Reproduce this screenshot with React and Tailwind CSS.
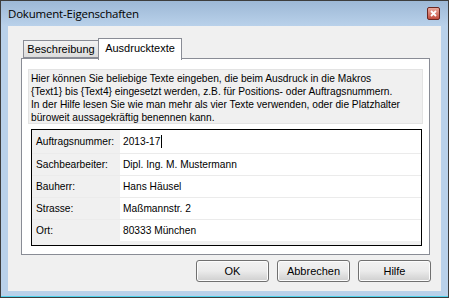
import React from 'react'

const ROWS = [
  { label: 'Auftragsnummer:', value: '2013-17', cursor: true },
  { label: 'Sachbearbeiter:', value: 'Dipl. Ing. M. Mustermann' },
  { label: 'Bauherr:', value: 'Hans Häusel' },
  { label: 'Strasse:', value: 'Maßmannstr. 2' },
  { label: 'Ort:', value: '80333 München' },
]

const ROW_H = ['h-[24px] border-b', 'h-[22px] border-b', 'h-[22px] border-b', 'h-[22px] border-b', 'h-[21px]']

function Button({ children }) {
  return (
    <button className="w-[73px] h-[22px] rounded-[3px] border border-[#707070] bg-gradient-to-b from-[#f2f2f2] via-[#ebebeb] to-[#cfcfcf] text-[11px] text-black shadow-[inset_0_0_0_1px_#fcfcfc]">
      {children}
    </button>
  )
}

export default function App() {
  return (
    <div className="w-[449px] h-[298px] bg-[#b9d1ea] border border-[#3d3d3d] flex flex-col font-['Liberation_Sans',Arial,sans-serif] text-black overflow-hidden">
      {/* title bar */}
      <div className="h-[25px] shrink-0 flex items-center justify-between pl-[7px] pr-[8px] bg-gradient-to-b from-[#9db8d6] to-[#b9d1ea]">
        <span className="text-[11.5px] font-['Open_Sans',sans-serif] pt-[1px] tracking-[-0.2px]">Dokument-Eigenschaften</span>
        <div className="w-[13px] h-[13px] mt-[-1px] rounded-[2px] border border-[#6b2620] bg-gradient-to-b from-[#e9a89d] to-[#c24a3c] flex items-center justify-center">
          <svg width="7" height="7" viewBox="0 0 7 7">
            <path d="M1 1 L6 6 M6 1 L1 6" stroke="#fff" strokeWidth="1.8" />
          </svg>
        </div>
      </div>

      {/* client area */}
      <div className="mx-[7px] h-[265px] bg-[#f0f0f0] flex flex-col pl-[13px] pr-[11px] pt-[11px]">
        <div className="flex items-end h-[22px] relative z-10 pl-[2px]">
          <div className="w-[76px] h-[18px] mb-[1px] border border-[#898c95] bg-gradient-to-b from-[#f2f2f2] to-[#dcdcdc] text-[11px] flex items-center justify-center">
            Beschreibung
          </div>
          <div className="w-[84px] h-[22px] -ml-px -mb-px border border-b-0 border-[#898c95] bg-white text-[11px] flex items-center justify-center pb-[2px]">
            Ausdrucktexte
          </div>
        </div>
        <div className="h-[197px] border border-[#898c95] bg-white -mt-px pt-[10px] px-[6px]">
          <div className="h-[55px] border border-[#e3e3e3] bg-[#f0f0f0] px-[2px] pt-[2px] text-[10.2px] leading-[13px]">
            <p>Hier können Sie beliebige Texte eingeben, die beim Ausdruck in die Makros</p>
            <p>{'{Text1}'} bis {'{Text4}'} eingesetzt werden, z.B. für Positions- oder Auftragsnummern.</p>
            <p>In der Hilfe lesen Sie wie man mehr als vier Texte verwenden, oder die Platzhalter</p>
            <p>büroweit aussagekräftig benennen kann.</p>
          </div>
          <div className="mt-[5px] ml-[3px] mr-[1px] border border-black bg-[#f0f0f0] text-[10.2px]">
            {ROWS.map((r, i) => (
              <div key={r.label} className={`${ROW_H[i]} border-[#ebebeb] flex`}>
                <div className="w-[88px] bg-[#f0f0f0] pl-[4px] flex items-center">{r.label}</div>
                <div className="flex-1 bg-white pl-[3px] flex items-center">
                  {r.value}
                  {r.cursor && <span className="inline-block w-px h-[13px] bg-black ml-[1px]" />}
                </div>
              </div>
            ))}
            <div className="h-[4px]" />
          </div>
        </div>
        <div className="flex justify-end gap-[8px] mt-[5px] mr-[-1px]">
          <Button>OK</Button>
          <Button>Abbrechen</Button>
          <Button>Hilfe</Button>
        </div>
      </div>
      <div className="flex-1" />
      <div className="h-px bg-[#4fd2ec]" />
    </div>
  )
}
